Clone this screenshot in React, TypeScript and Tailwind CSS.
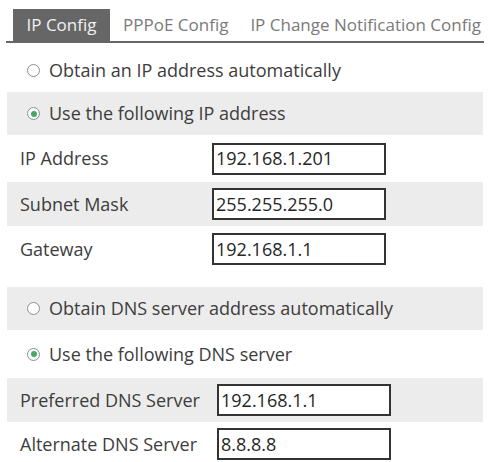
import React from "react";

const font = { fontFamily: '"Open Sans", "Noto Sans", sans-serif' };

function Radio({ checked }: { checked?: boolean }) {
  return (
    <span className="inline-flex h-[13px] w-[13px] items-center justify-center rounded-full border-[1.5px] border-[#8b8f94] bg-white">
      {checked && <span className="h-[6px] w-[6px] rounded-full bg-[#45a865]" />}
    </span>
  );
}

function RadioRow({ label, checked, shaded, h }: { label: string; checked?: boolean; shaded?: boolean; h: string }) {
  return (
    <div className={`flex items-center gap-[9px] pl-[20px] text-[18px] text-[#3d3d3d] ${h} ${shaded ? "bg-[#ececec]" : ""}`}>
      <Radio checked={checked} />
      <span>{label}</span>
    </div>
  );
}

function FieldRow({ label, value, shaded, labelW, h }: { label: string; value: string; shaded?: boolean; labelW: string; h: string }) {
  return (
    <div className={`flex items-center pl-[13px] text-[18px] text-[#3d3d3d] ${h} ${shaded ? "bg-[#ececec]" : ""}`}>
      <span className={`shrink-0 ${labelW}`}>{label}</span>
      <div className="flex h-[32px] w-[174px] items-center border-2 border-[#333] bg-white pl-[2px] text-[#262626]">
        {value}
      </div>
    </div>
  );
}

export default function App() {
  return (
    <div className="h-[462px] w-[490px] overflow-hidden bg-white" style={font}>
      <div className="mx-[6px] flex items-end border-b-2 border-[#666] pt-[9px] text-[17px]">
        <div className="ml-[7px] flex h-[32px] w-[97px] items-center justify-center bg-[#666] text-[#f2f2f2]">IP Config</div>
        <div className="ml-[13px] flex h-[32px] items-center text-[#7a7a7a]">PPPoE Config</div>
        <div className="ml-[22px] flex h-[32px] items-center text-[#7a7a7a]">IP Change Notification Config</div>
      </div>
      <div className="mx-[7px] mt-[6px]">
        <RadioRow label="Obtain an IP address automatically" h="h-[43px]" />
        <RadioRow label="Use the following IP address" checked shaded h="h-[43px]" />
        <FieldRow label="IP Address" value="192.168.1.201" labelW="w-[192px]" h="h-[47px]" />
        <FieldRow label="Subnet Mask" value="255.255.255.0" labelW="w-[192px]" shaded h="h-[44px]" />
        <FieldRow label="Gateway" value="192.168.1.1" labelW="w-[192px]" h="h-[46px]" />
        <div className="h-[15px]" />
        <RadioRow label="Obtain DNS server address automatically" shaded h="h-[43px]" />
        <RadioRow label="Use the following DNS server" checked h="h-[48px]" />
        <FieldRow label="Preferred DNS Server" value="192.168.1.1" labelW="w-[197px]" shaded h="h-[44px]" />
        <FieldRow label="Alternate DNS Server" value="8.8.8.8" labelW="w-[197px]" h="h-[44px]" />
      </div>
    </div>
  );
}
